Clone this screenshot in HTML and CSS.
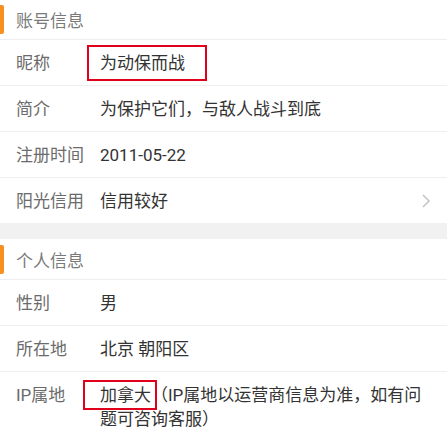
FILE: index.html
```html
<!DOCTYPE html>
<html lang="zh-CN">
<head>
    <meta charset="UTF-8">
    <meta name="viewport" content="width=device-width, initial-scale=1.0">
    <title>个人资料</title>
    <link rel="stylesheet" href="styles.css">
</head>
<body>
    <section class="group first">
        <div class="group-title"><span class="bar"></span>账号信息</div>
        <div class="row">
            <span class="label">昵称</span>
            <span class="value"><span class="mark mark-name">为动保而战</span></span>
        </div>
        <div class="row">
            <span class="label">简介</span>
            <span class="value">为保护它们，与敌人战斗到底</span>
        </div>
        <div class="row">
            <span class="label">注册时间</span>
            <span class="value">2011-05-22</span>
        </div>
        <div class="row last">
            <span class="label">阳光信用</span>
            <span class="value">信用较好</span>
            <svg class="arrow" width="10" height="16" viewBox="0 0 10 16">
                <polyline points="2,2 8,8 2,14" fill="none" stroke="#c4c4c4" stroke-width="1.5"/>
            </svg>
        </div>
    </section>

    <div class="gap"></div>

    <section class="group">
        <div class="group-title"><span class="bar"></span>个人信息</div>
        <div class="row">
            <span class="label">性别</span>
            <span class="value">男</span>
        </div>
        <div class="row">
            <span class="label">所在地</span>
            <span class="value">北京 朝阳区</span>
        </div>
        <div class="row last">
            <span class="label">IP属地</span>
            <span class="value"><span class="mark mark-ip">加拿大</span>（IP属地以运营商信息为准，如有问题可咨询客服）</span>
        </div>
    </section>
</body>
</html>
```

FILE: styles.css
```css
html {
    font-size: 17px;
}
body {
    margin: 0;
    padding: 0;
    background-color: #ffffff;
    font-family: Roboto, "Noto Sans CJK SC", sans-serif;
    color: #333;
}
.group {
    background-color: #ffffff;
}
.group.first {
    margin-top: -1px;
}
/* 分组标题 */
.group-title {
    display: flex;
    align-items: center;
    height: 40px;
    border-bottom: 1px solid #eeeeee;
    color: #7a7a7a;
    font-size: 1rem;
}
.bar {
    width: 4px;
    height: 29px;
    margin-right: 12px;
    background-color: #f7901e;
    border-radius: 0 2px 2px 0;
}
/* 信息行 */
.row {
    display: flex;
    align-items: flex-start;
    padding: 10.5px 16px 10.5px 16px;
    line-height: 24px;
    border-bottom: 1px solid #eeeeee;
}
.row.last {
    border-bottom: none;
}
.label {
    flex: 0 0 84px;
    color: #6b6b6b;
}
.value {
    flex: 1;
    color: #333333;
}
.arrow {
    align-self: center;
    margin-right: 0;
}
.gap {
    height: 16px;
    background-color: #f1f1f1;
}
/* 红框标注 */
.mark {
    position: relative;
}
.mark::after {
    content: "";
    position: absolute;
    border: 2px solid #e0001b;
}
.mark-name::after {
    left: -13px;
    right: -22px;
    top: -8px;
    bottom: -8px;
}
.mark-ip::after {
    left: -17px;
    right: -6px;
    top: -5px;
    bottom: -5px;
}
```
